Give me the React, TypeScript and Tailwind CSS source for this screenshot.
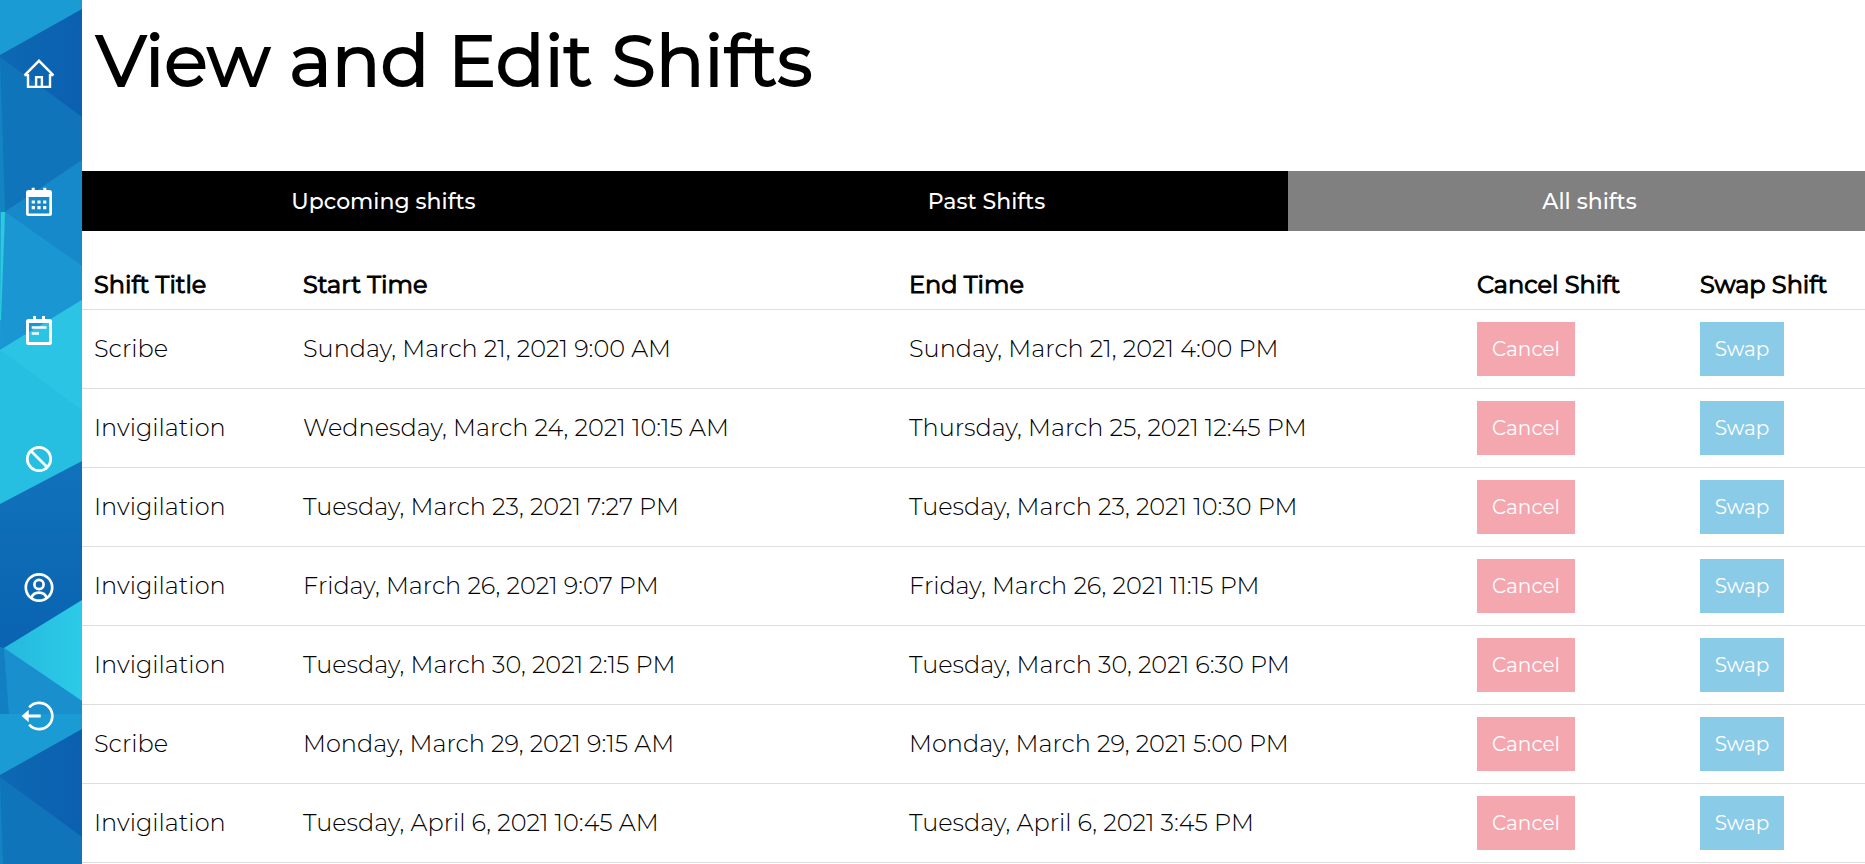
import type { ReactNode } from "react";

const shifts = [
  ["Scribe", "Sunday, March 21, 2021 9:00 AM", "Sunday, March 21, 2021 4:00 PM"],
  ["Invigilation", "Wednesday, March 24, 2021 10:15 AM", "Thursday, March 25, 2021 12:45 PM"],
  ["Invigilation", "Tuesday, March 23, 2021 7:27 PM", "Tuesday, March 23, 2021 10:30 PM"],
  ["Invigilation", "Friday, March 26, 2021 9:07 PM", "Friday, March 26, 2021 11:15 PM"],
  ["Invigilation", "Tuesday, March 30, 2021 2:15 PM", "Tuesday, March 30, 2021 6:30 PM"],
  ["Scribe", "Monday, March 29, 2021 9:15 AM", "Monday, March 29, 2021 5:00 PM"],
  ["Invigilation", "Tuesday, April 6, 2021 10:45 AM", "Tuesday, April 6, 2021 3:45 PM"],
];

function NavIcon({ label, children }: { label: string; children: ReactNode }) {
  return (
    <a href="#" aria-label={label} className="block h-8 w-8">
      <svg viewBox="0 0 32 32" className="h-8 w-8 overflow-visible" fill="none" stroke="#fff" strokeWidth="2.7">
        {children}
      </svg>
    </a>
  );
}

function Backdrop() {
  return (
    <svg className="absolute inset-0 h-full w-full" aria-hidden="true">
      <defs>
        <linearGradient id="deep" x1="0" y1="0" x2="0" y2="1">
          <stop offset="0" stopColor="#1173bc" />
          <stop offset="0.45" stopColor="#0d6bb5" />
          <stop offset="1" stopColor="#0a63b1" />
        </linearGradient>
        <linearGradient id="navy" x1="0" y1="0" x2="1" y2="0">
          <stop offset="0" stopColor="#0d68b3" />
          <stop offset="1" stopColor="#0b60b0" />
        </linearGradient>
        <linearGradient id="aqua" x1="0" y1="0" x2="1" y2="0">
          <stop offset="0" stopColor="#25b8dd" />
          <stop offset="1" stopColor="#2ccbe8" />
        </linearGradient>
        <pattern id="facets" width="82" height="720" y="-6" patternUnits="userSpaceOnUse">
          <rect width="82" height="720" fill="#1a9bd4" />
          <polygon points="0,61 82,15 82,126 0,68" fill="url(#navy)" />
          <polygon points="0,63 82,123 82,167 5,218 0,218" fill="#1074bb" />
          <polygon points="0,64 5,218 0,218" fill="#1384c2" />
          <polygon points="5,218 82,166 82,273" fill="#1689ca" />
          <polygon points="5,218 82,272 82,308 0,357" fill="#1a97d3" />
          <polygon points="1,218 5,218 1,326 0,326" fill="#2bcbdc" />
          <polygon points="0,356 82,306 82,468 0,511" fill="#26bfe1" />
          <polygon points="0,356 82,306 82,416" fill="#2bc4e4" />
          <polygon points="0,510 82,467 82,608 4,654 0,654" fill="url(#deep)" />
          <polygon points="4,654 82,606 82,707" fill="url(#aqua)" />
          <polygon points="4,654 82,707 82,720 8,720" fill="#1a8fce" />
          <polygon points="0,653 4,654 9,720 0,720" fill="#137fc3" />
        </pattern>
      </defs>
      <rect width="100%" height="100%" fill="url(#facets)" />
    </svg>
  );
}

export default function App() {
  return (
    <div className="flex h-screen overflow-hidden bg-white font-['Montserrat','Inter',sans-serif] text-black">
      <aside className="relative w-[82px] shrink-0">
        <Backdrop />
        <nav className="relative flex flex-col gap-24 pt-[58px] pl-[23px]">
          <NavIcon label="Home">
            <path
              d="M1.500 17.300 L16 2.800 L30.500 17.300 M1.500 17.100 H5 V28.900 H27 V17.100 H30.500 M13.100 29 V19.100 H18.900 V29"
              strokeWidth="2.400"
            />
          </NavIcon>
          <NavIcon label="Calendar">
            <path
              fill="#fff"
              stroke="none"
              fillRule="evenodd"
              d="M8.700 1.700h3v2.300h8.600v-2.300h3v2.300h3.200a2.500 2.500 0 0 1 2.500 2.500v21a2.500 2.500 0 0 1-2.500 2.500h-21a2.500 2.500 0 0 1-2.500-2.500v-21a2.500 2.500 0 0 1 2.500-2.500h3.200z M5.700 11v16.500h20.600v-16.500z"
            />
            <path d="M8.700 16h3.200m2.500 0h3.200m2.500 0h3.200M8.700 21.700h3.200m2.500 0h3.200m2.500 0h3.200" strokeWidth="3.200" />
          </NavIcon>
          <NavIcon label="Shifts">
            <path
              fill="#fff"
              stroke="none"
              fillRule="evenodd"
              d="M10 2h3v3h6v-3h3v3h4.500a2.500 2.500 0 0 1 2.500 2.500v21a2.500 2.500 0 0 1-2.500 2.500h-21a2.500 2.500 0 0 1-2.500-2.500v-21a2.500 2.500 0 0 1 2.500-2.500h4.500z M6 9v19h20v-19z"
            />
            <path d="M8.700 13.500h14.800M8.700 19.500h7.300" />
          </NavIcon>
          <NavIcon label="Unavailability">
            <circle cx="16" cy="17" r="11.700" />
            <path d="M7.500 8.500l17 17" />
          </NavIcon>
          <NavIcon label="Profile">
            <circle cx="16" cy="17.500" r="13.200" />
            <circle cx="16" cy="14.500" r="4.600" />
            <path d="M8.300 28c1.200-3.600 3.600-5.400 7.700-5.400s6.500 1.800 7.700 5.400" />
          </NavIcon>
          <NavIcon label="Log out">
            <path d="M6.200 9.300a13.200 13.200 0 1 1 0 17.400" />
            <path d="M17.700 18H5" strokeWidth="3" />
            <path d="M-1.300 18l7-6.200v12.400z" fill="#fff" stroke="none" />
          </NavIcon>
        </nav>
      </aside>
      <main className="min-w-0 flex-1 overflow-hidden">
        <h1 className="px-3.5 pt-[15px] pb-[66px] text-7xl leading-[90px] font-normal whitespace-nowrap [-webkit-text-stroke:2px_#000]">
          View and Edit Shifts
        </h1>
        <div className="-mr-[26px]">
          <div className="grid grid-cols-3 bg-black text-[22px] font-medium text-white">
            <button type="button" className="h-[60px]">Upcoming shifts</button>
            <button type="button" className="h-[60px]">Past Shifts</button>
            <button type="button" className="h-[60px] bg-[#808080]">All shifts</button>
          </div>
          <table className="w-full table-fixed border-collapse text-left text-2xl whitespace-nowrap">
            <thead>
              <tr className="h-[78px] border-b border-[#dddddd] align-bottom [-webkit-text-stroke:1px_#000]">
                <th className="w-[209px] px-3 pb-2 font-normal">Shift Title</th>
                <th className="w-[33.5%] px-3 pb-2 font-normal">Start Time</th>
                <th className="px-3 pb-2 font-normal">End Time</th>
                <th className="w-[223px] px-3 pb-2 font-normal">Cancel Shift</th>
                <th className="w-[203px] px-3 pb-2 font-normal">Swap Shift</th>
              </tr>
            </thead>
            <tbody>
              {shifts.map(([title, start, end]) => (
                <tr key={start} className="h-[79px] border-b border-[#dddddd]">
                  <td className="px-3 font-light">{title}</td>
                  <td className="px-3 font-light">{start}</td>
                  <td className="px-3 font-light">{end}</td>
                  <td className="px-3">
                    <button type="button" className="block h-[54px] w-[98px] bg-[#f4a7af] text-xl text-white">Cancel</button>
                  </td>
                  <td className="px-3">
                    <button type="button" className="block h-[54px] w-[84px] bg-[#8acbe8] text-xl text-white">Swap</button>
                  </td>
                </tr>
              ))}
            </tbody>
          </table>
        </div>
      </main>
    </div>
  );
}
